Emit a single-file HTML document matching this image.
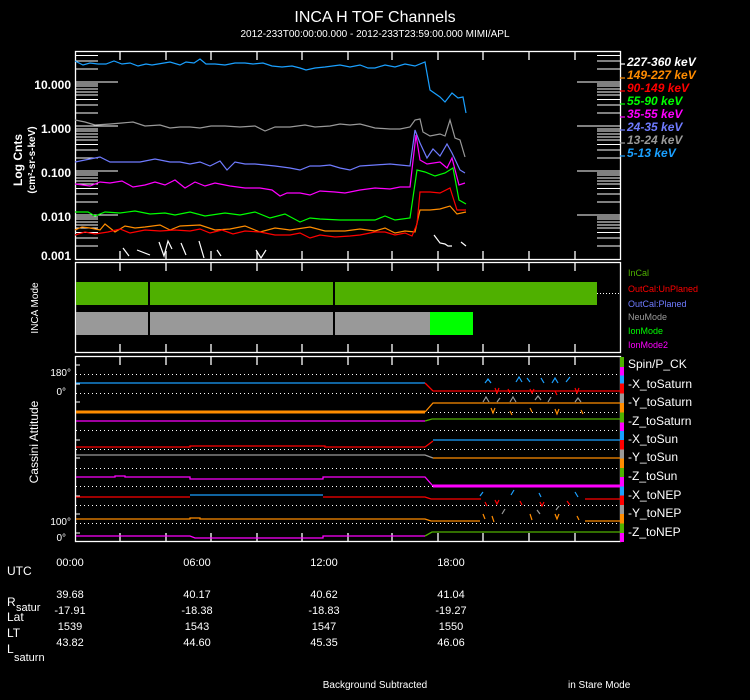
<!DOCTYPE html>
<html><head><meta charset="utf-8"><style>
html,body{margin:0;padding:0;background:#000;width:750px;height:700px;overflow:hidden}
svg{display:block}
text{font-family:"Liberation Sans",sans-serif;fill:#fff}
</style></head><body>
<svg width="750" height="700" viewBox="0 0 750 700" xmlns="http://www.w3.org/2000/svg">
<defs>
<path id="mt" d="M75 -13H98M75 -21H98M75 -26.5H98M75 -31H98M75 -34H98M75 -37H98M75 -40H98M75 -42H98M597 -13H620M597 -21H620M597 -26.5H620M597 -31H620M597 -34H620M597 -37H620M597 -40H620M597 -42H620" stroke="#fff" stroke-width="1"/>
<path id="vt" d="M120 0v8M166 0v8M211 0v8M257 0v8M302 0v8M348 0v8M392 0v8M438 0v8M483 0v8M529 0v8M575 0v8" stroke="#fff" stroke-width="1.3"/>
<path id="vb" d="M120 0v-8M166 0v-8M211 0v-8M257 0v-8M302 0v-8M348 0v-8M392 0v-8M438 0v-8M483 0v-8M529 0v-8M575 0v-8" stroke="#fff" stroke-width="1.3"/>
<linearGradient id="cb" x1="0" y1="0" x2="0" y2="1">
<stop offset="0" stop-color="#4fb000"/><stop offset=".054" stop-color="#4fb000"/>
<stop offset=".054" stop-color="#ff00ff"/><stop offset=".1" stop-color="#ff00ff"/>
<stop offset=".1" stop-color="#1aa0ff"/><stop offset=".143" stop-color="#1aa0ff"/>
<stop offset=".143" stop-color="#ff0000"/><stop offset=".196" stop-color="#ff0000"/>
<stop offset=".196" stop-color="#999"/><stop offset=".25" stop-color="#999"/>
<stop offset=".25" stop-color="#ff8c00"/><stop offset=".3" stop-color="#ff8c00"/>
<stop offset=".3" stop-color="#4fb000"/><stop offset=".354" stop-color="#4fb000"/>
<stop offset=".354" stop-color="#ff00ff"/><stop offset=".4" stop-color="#ff00ff"/>
<stop offset=".4" stop-color="#1aa0ff"/><stop offset=".45" stop-color="#1aa0ff"/>
<stop offset=".45" stop-color="#ff0000"/><stop offset=".5" stop-color="#ff0000"/>
<stop offset=".5" stop-color="#999"/><stop offset=".55" stop-color="#999"/>
<stop offset=".55" stop-color="#ff8c00"/><stop offset=".6" stop-color="#ff8c00"/>
<stop offset=".6" stop-color="#4fb000"/><stop offset=".65" stop-color="#4fb000"/>
<stop offset=".65" stop-color="#ff00ff"/><stop offset=".7" stop-color="#ff00ff"/>
<stop offset=".7" stop-color="#1aa0ff"/><stop offset=".75" stop-color="#1aa0ff"/>
<stop offset=".75" stop-color="#ff0000"/><stop offset=".8" stop-color="#ff0000"/>
<stop offset=".8" stop-color="#999"/><stop offset=".85" stop-color="#999"/>
<stop offset=".85" stop-color="#ff8c00"/><stop offset=".9" stop-color="#ff8c00"/>
<stop offset=".9" stop-color="#4fb000"/><stop offset=".95" stop-color="#4fb000"/>
<stop offset=".95" stop-color="#ff00ff"/><stop offset="1" stop-color="#ff00ff"/>
</linearGradient>
<clipPath id="c1"><rect x="75" y="51" width="545" height="208"/></clipPath>
</defs>

<text x="375" y="22" font-size="16" text-anchor="middle">INCA H TOF Channels</text>
<text x="375" y="37" font-size="10" text-anchor="middle">2012-233T00:00:00.000 - 2012-233T23:59:00.000 MIMI/APL</text>

<rect x="75.5" y="51.5" width="545" height="208" fill="none" stroke="#fff" stroke-width="1.3"/>
<g clip-path="url(#c1)">
<use href="#mt" y="82"/><use href="#mt" y="126"/><use href="#mt" y="171"/><use href="#mt" y="215"/><use href="#mt" y="259"/>
</g>
<path d="M75 82H118M75 126H118M75 171H118M75 215H118M577 82H620M577 126H620M577 171H620M577 215H620" stroke="#fff" stroke-width="1"/>
<use href="#vt" y="52"/><use href="#vb" y="259"/>
<g font-size="12" font-weight="bold" text-anchor="end">
<text x="71" y="89">10.000</text><text x="71" y="133">1.000</text><text x="71" y="177">0.100</text><text x="71" y="221">0.010</text><text x="71" y="260">0.001</text>
</g>
<text transform="translate(22,160) rotate(-90)" font-size="12" font-weight="bold" text-anchor="middle">Log Cnts</text>
<text transform="translate(35,160) rotate(-90)" font-size="10" font-weight="bold" text-anchor="middle">(cm²-sr-s-keV)</text>

<g fill="none" stroke-width="1.2" clip-path="url(#c1)">
<polyline stroke="#1aa0ff" points="75,61 83,65 90,63 98,64 106,64 114,61 122,64 130,63 138,66 146,64 152,65 158,64 170,62 180,65 186,62 194,63 200,59 206,64 215,64 225,65 235,63 245,63 253,64 263,63 272,66 282,67 292,66 300,68 306,70 315,68 325,67 340,65 350,67 360,65 368,68 375,68 385,65 395,67 405,64 415,66 425,62 430,90 440,97 445,102 452,93 458,98 463,97 466,113"/>
<polyline stroke="#999" points="75,120 85,122 95,125 110,124 122,123 133,122 145,126 160,125 170,128 180,127 190,127 200,128 211,126 225,126 240,127 255,126 265,131 275,127 290,127 305,125 315,127 330,126 340,124 350,125 360,124 375,128 390,129 400,129 410,127 415,120 420,119 423,132 430,136 440,134 445,136 450,120 455,138 460,140 465,157"/>
<polyline stroke="#6f7bff" points="75,162 90,159 100,157 110,162 125,162 140,162 155,159 170,162 180,162 190,164 200,162 210,166 220,161 227,170 235,162 245,164 255,164 265,165 275,166 290,168 300,170 310,166 320,166 330,165 340,168 350,170 360,166 375,165 390,164 400,165 410,166 415,130 420,143 427,158 433,149 440,156 447,144 452,153 460,170 465,173"/>
<polyline stroke="#ff00ff" points="75,184 90,186 100,182 110,183 122,181 133,187 145,185 155,182 165,185 175,180 185,188 195,182 205,186 215,183 230,186 245,188 260,188 272,190 280,196 287,193 300,193 310,195 320,191 335,192 345,193 360,190 375,188 390,189 400,187 410,187 416,135 420,160 427,164 440,162 447,168 452,158 459,185 465,183"/>
<polyline stroke="#00ff00" points="75,212 88,212 95,216 105,212 120,213 135,211 150,214 165,213 175,215 190,212 205,216 225,213 240,215 255,212 270,218 285,214 300,222 310,218 320,219 340,220 355,220 375,220 385,216 395,220 410,218 417,170 425,172 435,176 445,173 453,168 459,200 466,204"/>
<polyline stroke="#ff8c00" points="75,230 82,227 90,228 100,230 105,224 115,232 125,226 135,228 145,227 160,225 170,230 180,226 200,225 215,230 230,229 245,226 260,232 275,228 290,230 310,227 325,231 345,231 360,229 375,231 385,228 395,233 405,231 415,232 420,210 430,210 440,209 450,206 457,214 466,212"/>
<polyline stroke="#ff0000" points="75,235 85,232 95,234 108,232 120,229 130,233 145,230 160,231 175,230 190,231 200,229 210,233 222,230 233,234 245,231 260,232 275,235 290,235 300,233 310,238 320,235 335,237 350,236 360,235 375,232 385,232 395,235 405,233 412,236 417,224 420,192 430,192 440,193 450,188 457,210 466,210"/>
<path stroke="#fff" d="M123 248L129 256M137 250L150 255M159 242L164 256L168 241L172 249M181 243L186 255M199 241L204 258M217 250L221 256M256 250L261 258L266 250M434 235L440 243L445 244L448 246L452 246M461 242L466 246"/>
</g>
<g stroke-width="1.2">
<path d="M620 64h5" stroke="#fff"/><path d="M620 78h5" stroke="#ff8c00"/><path d="M620 91h5" stroke="#f00"/><path d="M620 104h5" stroke="#0f0"/><path d="M620 117h5" stroke="#f0f"/><path d="M620 130h5" stroke="#6f7bff"/><path d="M620 143h5" stroke="#999"/><path d="M620 156h5" stroke="#1aa0ff"/>
</g>
<g font-size="12" font-weight="bold" font-style="italic">
<text x="627" y="66" fill="#fff">227-360 keV</text>
<text x="627" y="79" style="fill:#ff8c00">149-227 keV</text>
<text x="627" y="92" style="fill:#ff0000">90-149 keV</text>
<text x="627" y="105" style="fill:#00ff00">55-90 keV</text>
<text x="627" y="118" style="fill:#ff00ff">35-55 keV</text>
<text x="627" y="131" style="fill:#6f7bff">24-35 keV</text>
<text x="627" y="144" style="fill:#999">13-24 keV</text>
<text x="627" y="157" style="fill:#1aa0ff">5-13 keV</text>
</g>

<rect x="75.5" y="262.5" width="545" height="90" fill="none" stroke="#fff" stroke-width="1.3"/>
<use href="#vt" y="263"/><use href="#vb" y="352"/>
<rect x="76" y="282" width="521" height="23" fill="#4fb000"/>
<rect x="76" y="312" width="354" height="23" fill="#999"/>
<rect x="430" y="312" width="43" height="23" fill="#00ff00"/>
<rect x="148" y="282" width="2" height="53" fill="#000"/>
<rect x="333" y="282" width="2" height="53" fill="#000"/>
<path d="M597 293.5h23" stroke="#fff" stroke-dasharray="1 2"/>
<text transform="translate(38,308) rotate(-90)" font-size="10" text-anchor="middle">INCA Mode</text>
<g font-size="9">
<text x="628" y="276" style="fill:#4fb000">InCal</text>
<text x="628" y="292" style="fill:#ff0000">OutCal:UnPlaned</text>
<text x="628" y="307" style="fill:#6f7bff">OutCal:Planed</text>
<text x="628" y="320" style="fill:#999">NeuMode</text>
<text x="628" y="334" style="fill:#00ff00">IonMode</text>
<text x="628" y="348" style="fill:#ff00ff">IonMode2</text>
</g>

<rect x="75.5" y="356.5" width="545" height="185" fill="none" stroke="#fff" stroke-width="1.3"/>
<use href="#vt" y="357"/><use href="#vb" y="541"/>
<g stroke="#fff" stroke-dasharray="1 3" stroke-width="1">
<path d="M76 374.5H620M76 393.5H620M76 412.5H620M76 430.5H620M76 449.5H620M76 468.5H620M76 486.5H620M76 505.5H620M76 523.5H620"/>
</g>
<path d="M75 365h5M75 384h5M75 402h5M75 421h5M75 440h5M75 458h5M75 477h5M75 496h5M75 514h5M75 533h5" stroke="#fff"/>
<g fill="none" stroke-width="1.3">
<path stroke="#1aa0ff" d="M76 383H425"/><path stroke="#f00" d="M425 383L433 391H620"/>
<path stroke="#ff8c00" stroke-width="3" d="M76 412H425"/><path stroke="#ff8c00" d="M425 412L433 403H620"/>
<path stroke="#f0f" d="M76 421H425"/><path stroke="#4fb000" d="M425 421L432 419H620"/>
<path stroke="#f00" d="M76 447H190V446H325V447H425L433 441"/><path stroke="#1aa0ff" d="M433 440H620"/>
<path stroke="#999" d="M76 455H425L433 458"/><path stroke="#ff8c00" d="M433 458H620"/>
<path stroke="#f0f" d="M76 477H115V476H125V477H190V479H323V477H425L433 486"/><path stroke="#f0f" stroke-width="3" d="M433 486H620"/>
<path stroke="#1aa0ff" d="M190 495H323"/><path stroke="#f00" d="M76 497H190M323 497H425L431 499H481M585 499H620"/>
<path stroke="#ff8c00" d="M76 519H190V518H200V519H425L431 521H480M585 521H620"/>
<path stroke="#f0f" d="M76 536H190L195 538H323V536H425"/><path stroke="#4fb000" d="M425 536L432 532H620"/>
</g>
<g fill="none" stroke-width="1.2">
<path stroke="#1aa0ff" d="M485 383l3-4 3 4M516 382l3-5 3 5M527 378l3 4M541 378l3 5M552 383l3-5 3 5M566 382l4-5M480 496l3-4M511 495l3-5M539 493l2 4M575 492l3 5"/>
<path stroke="#f00" d="M495 388l2 5 2-5M508 389l2 4M530 389l2 4 2-4M555 391l2 4M575 388l2 5 2-5M485 502l2 4M495 500l2 4 2-4M520 501l2 4M540 502l2 4 2-4M567 501l3 4"/>
<path stroke="#999" d="M483 402l3-5 3 5M497 402l3-4M510 402l3-5 3 5M535 400l3-4 3 4M548 402l3-5M575 402l3-4 3 4M502 514l3-5M537 510l3 4M556 510l3-4"/>
<path stroke="#ff8c00" d="M491 408l2 5 2-5M510 411l2 4M530 408l2 4M555 409l2 5 2-5M581 410l2 4M483 514l2 5M492 516l2 6M530 514l2 6M555 514l2 5 2-5M577 516l2 4"/>
</g>
<rect x="620" y="357" width="4" height="185" fill="url(#cb)"/>
<text transform="translate(38,442) rotate(-90)" font-size="12" text-anchor="middle">Cassini Attitude</text>
<g font-size="10" text-anchor="end">
<text x="71" y="376">180°</text><text x="66" y="395">0°</text>
<text x="71" y="525">100°</text><text x="66" y="541">0°</text>
</g>
<g font-size="12">
<text x="628" y="368">Spin/P_CK</text>
<text x="628" y="388">-X_toSaturn</text>
<text x="628" y="406">-Y_toSaturn</text>
<text x="628" y="425">-Z_toSaturn</text>
<text x="628" y="443">-X_toSun</text>
<text x="628" y="461">-Y_toSun</text>
<text x="628" y="480">-Z_toSun</text>
<text x="628" y="499">-X_toNEP</text>
<text x="628" y="517">-Y_toNEP</text>
<text x="628" y="536">-Z_toNEP</text>
</g>

<g font-size="11" text-anchor="middle">
<text x="70" y="566">00:00</text><text x="197" y="566">06:00</text><text x="324" y="566">12:00</text><text x="451" y="566">18:00</text>
<text x="70" y="598">39.68</text><text x="197" y="598">40.17</text><text x="324" y="598">40.62</text><text x="451" y="598">41.04</text>
<text x="70" y="614">-17.91</text><text x="197" y="614">-18.38</text><text x="324" y="614">-18.83</text><text x="451" y="614">-19.27</text>
<text x="70" y="630">1539</text><text x="197" y="630">1543</text><text x="324" y="630">1547</text><text x="451" y="630">1550</text>
<text x="70" y="646">43.82</text><text x="197" y="646">44.60</text><text x="324" y="646">45.35</text><text x="451" y="646">46.06</text>
</g>
<g font-size="12">
<text x="7" y="575">UTC</text>
<text x="7" y="606">R</text><text x="16" y="611" font-size="11">satur</text>
<text x="7" y="621">Lat</text>
<text x="7" y="637">LT</text>
<text x="7" y="653">L</text><text x="14" y="661" font-size="11">saturn</text>
</g>
<text x="375" y="688" font-size="10" text-anchor="middle">Background Subtracted</text>
<text x="568" y="688" font-size="10">in Stare Mode</text>
</svg>
</body></html>
